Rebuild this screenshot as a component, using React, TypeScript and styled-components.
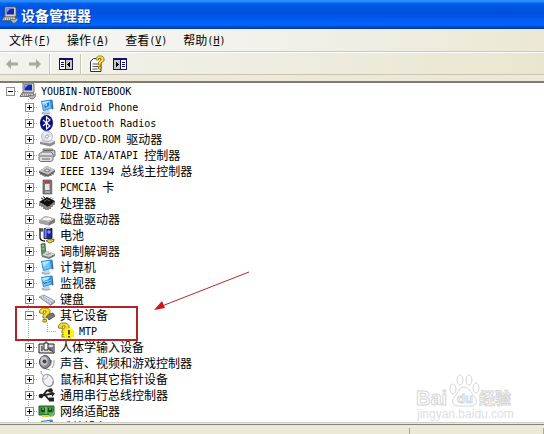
import React from "react";
import styled, { createGlobalStyle, css } from "styled-components";

const GlobalStyle = createGlobalStyle`
  html, body, #root { height: 100%; margin: 0; }
  *, *::before, *::after { box-sizing: border-box; }
  body { overflow: hidden; background: #ece9d8; }
  button { font: inherit; color: inherit; border: 0; padding: 0; background: none; }
`;

const Window = styled.main`
  display: flex;
  flex-direction: column;
  height: 100vh;
  overflow: hidden;
  color: #000;
  font: 12px/16px "Noto Sans CJK SC", sans-serif;
`;

const TitleBar = styled.header`
  display: flex;
  flex: none;
  align-items: center;
  gap: 3px;
  height: 29px;
  padding: 0 2px;
  background: linear-gradient(#2f8fff 0, #2487fb 2px, #0563ec 3px, #0054e3 7px, #0050e0 14px, #005cf5 20px, #0066ff 25px, #0048c8 27px, #003a9c 29px);
`;

const Title = styled.h1`
  margin: 0;
  color: #fff;
  font-size: 14px;
  line-height: 20px;
  font-weight: 700;
  text-shadow: 1px 1px 0 #0b3a99;
`;

const MenuBar = styled.nav`
  display: flex;
  flex: none;
  gap: 16px;
  height: 23px;
  padding: 3px 9px;
  background: linear-gradient(90deg, #f6f6f6, #f2f1ea 50%, #ece8d5);
  border-bottom: 1px solid #cbc8b4;
`;

const MenuButton = styled.button`
  display: flex;
  white-space: nowrap;
`;

const Mono = styled.span`
  padding-top: 1px;
  font-family: "DejaVu Sans Mono", monospace;
  font-size: 10px;
  white-space: pre;
`;

const ToolBar = styled.div`
  display: flex;
  flex: none;
  align-items: center;
  height: 23px;
  background: linear-gradient(90deg, #f3f3ee, #efede2 45%, #e9e6cf);
  border-top: 1px solid #fff;
  border-bottom: 1px solid #c9c5b2;
`;

const ToolButton = styled.button`
  display: flex;
  justify-content: center;
  width: 23px;
`;

const Separator = styled.span`
  width: 2px;
  height: 20px;
  margin: 0 3px;
  border-left: 1px solid #c9c6b6;
  border-right: 1px solid #fff;
`;

const Icon = styled.svg`
  display: block;
  flex: none;
  width: 16px;
  height: 16px;
  overflow: visible;
`;

const TreePane = styled.section`
  position: relative;
  flex: 1;
  min-height: 0;
  margin-top: 6px;
  overflow: hidden;
  background: #fff;
  border-top: 2px solid #7d7c72;
  border-bottom: 1px solid #d0cec4;
`;

const TreeList = styled.ul`
  margin: 0;
  padding: 0;
  list-style: none;
`;

const TreeItem = styled.li<{ $marked?: boolean }>`
  ${(p) =>
    p.$marked &&
    css`
      position: relative;
      &::after {
        content: "";
        position: absolute;
        top: -1px;
        bottom: -2px;
        left: 15px;
        width: 123px;
        border: 2px solid #b32428;
      }
    `}
`;

const Row = styled.div`
  display: flex;
  align-items: center;
  height: 16px;
`;

const Gutter = styled.span<{ $down?: "full" | "half"; $across?: boolean }>`
  display: flex;
  flex: none;
  align-items: center;
  justify-content: center;
  width: 19px;
  height: 16px;
  background-repeat: no-repeat;
  background-image:
    ${(p) => (p.$down ? "repeating-linear-gradient(#aaa 0 1px, transparent 1px 2px)" : "none")},
    ${(p) => (p.$across ? "repeating-linear-gradient(90deg, #aaa 0 1px, transparent 1px 2px)" : "none")};
  background-size: 1px ${(p) => (p.$down === "half" ? "8px" : "16px")}, 10px 1px;
  background-position: 9px 0, 9px 8px;
`;

const Expander = styled.button`
  display: block;
  width: 10px;
  height: 10px;
  background: #fff;
  svg { display: block; }
`;

const Entry = styled.span`
  display: flex;
  align-items: center;
  gap: 5px;
  padding-left: 1px;
  white-space: nowrap;
`;

const Label = styled.span`
  display: flex;
  align-items: flex-start;
  height: 16px;
`;

const Arrow = styled.svg`
  position: absolute;
  top: 185px;
  left: 150px;
`;

const Watermark = styled.div`
  position: absolute;
  right: 26px;
  bottom: 0;
  width: 104px;
  svg { display: block; }
`;

const StatusBar = styled.footer`
  display: grid;
  flex: none;
  grid-template-columns: 1fr 134px;
  height: 10px;
  margin-top: 1px;
  background: #ece9d8;
  border-top: 1px solid #858478;
`;

const StatusCell = styled.span`
  margin-top: 3px;
  border-right: 1px solid #aca899;
`;

type IconName =
  | "pc" | "phone" | "bluetooth" | "disc" | "ide" | "firewire" | "pcmcia" | "chip" | "disk" | "battery"
  | "modem" | "computer" | "monitor" | "keyboard" | "question" | "warning" | "hid" | "sound" | "mouse" | "usb" | "network";

const blueScreen = (
  <>
    <ellipse cx="7" cy="14" rx="4.5" ry="1.7" fill="#a9b4c2" />
    <path d="M6 10h4l1 4H5z" fill="#c9d3dd" />
    <path d="M2 2l10-1.500 1 9-9 2.500z" fill="#2588d8" />
    <path d="M3 3l8-1.200.8 7.200-7 2z" fill="#6fc4f6" />
    <path d="M3 3l8-1.200-6 6z" fill="#b7e6ff" />
    <path d="M12 .5l1.500.5 1 9-1.500.5z" fill="#346a9c" />
  </>
);

const questionMark = (
  <>
    <path d="M2.500 6V3.500L5.500 1h5L13 3.500V6l-3.500 3v2H6V8l3-2.500V4H6.500v2.500z" fill="#f8df22" stroke="#8c7510" strokeWidth=".9" />
    <path d="M6 12.500h3.500V15H6z" fill="#f8df22" stroke="#8c7510" strokeWidth=".9" />
  </>
);

const drive = (
  <>
    <path d="M0 9l6-4 10 2.500v4L10 14.500 0 12z" fill="#777" />
    <path d="M0 9l6-4 10 2.500-6 3.700z" fill="#d2d2d2" />
    <path d="M0 9l10 2.200v3.300L0 12z" fill="#a2a2a2" />
  </>
);

const art: Record<IconName, React.ReactNode> = {
  pc: (
    <>
      <path d="M3 0h10l1 1v8l-1 1H3z" fill="#d7d4c8" stroke="#555" strokeWidth=".8" />
      <path d="M4.500 1.500h7.500v6H4.500z" fill="#1428b0" />
      <path d="M5 2h3L5 5z" fill="#87a8ff" />
      <path d="M2 10h11l1.500 3.500H0z" fill="#d7d4c8" stroke="#555" strokeWidth=".8" />
      <path d="M2 12h10" stroke="#555" strokeDasharray="1 1" />
      <path d="M8 12.500h5l2.500-2v3L13 16h-2z" fill="#b5b5b5" stroke="#555" strokeWidth=".6" />
    </>
  ),
  phone: (
    <>
      {blueScreen}
      <path d="M5 6l5-3v4L6 9z" fill="#2c7cc8" />
      <path d="M6 6l2-1v2z" fill="#fff" />
    </>
  ),
  monitor: (
    <>
      {blueScreen}
      <path d="M4 7l3-2 1 1 3-3v4L5 9z" fill="#2670b8" />
      <path d="M5 7.500L7 6l1 1 3-2" fill="none" stroke="#b7f0ae" />
    </>
  ),
  computer: blueScreen,
  bluetooth: (
    <>
      <ellipse cx="7.500" cy="8" rx="6.500" ry="8" fill="#0b1280" />
      <path d="M4 5l7 6-3.500 3V2L11 5l-7 6" fill="none" stroke="#fff" strokeWidth="1.100" />
    </>
  ),
  disc: (
    <>
      <path d="M1 11l4-3 11 2v3l-5 2.500L1 13z" fill="#8c8c8c" />
      <path d="M1 11l4-3 11 2-5 2.500z" fill="#dedede" />
      <ellipse cx="8" cy="5.500" rx="5.500" ry="5.300" fill="#dce2ed" stroke="#a4a9b7" strokeWidth=".8" />
      <path d="M8 5.500L4 2l3-1.500zM8 5.500l5 1-2 3z" fill="#f7fbff" />
      <circle cx="8" cy="5.500" r="1.500" fill="#fff" stroke="#888" strokeWidth=".7" />
    </>
  ),
  ide: (
    <>
      <path d="M4 2h9l3 2v5l-2 1H4z" fill="#c8c8c8" stroke="#555" strokeWidth=".8" />
      <path d="M0 7l3-2h9l2 2v6l-2 1.500H1.500L0 13z" fill="#ddd" stroke="#555" strokeWidth=".8" />
      <path d="M1 9h12M5 3.500h9" stroke="#666" />
      <path d="M3 12h8" stroke="#8c8c8c" strokeWidth="1.500" />
    </>
  ),
  firewire: (
    <>
      <path d="M0 8l8-5 8 4v2l-7 5-9-4z" fill="#666" />
      <path d="M0 8l8-5 8 4-7 4.500z" fill="#c9c9c9" />
      <path d="M4 8l4-2.500 4 2-3.500 2z" fill="#777" />
      <path d="M6 7.500l2-1 2 1-1.500 1z" fill="#eee" />
      <path d="M2 10v2M4 11v2M6 12v2M12 12v1M14 10v2" stroke="#444" />
    </>
  ),
  pcmcia: (
    <>
      <path d="M4 1h8l.8 1v13H4z" fill="#77777f" stroke="#555" strokeWidth=".7" />
      <path d="M5 2h6.500v2H5z" fill="#b9433b" />
      <path d="M6 5h4.500v6H6z" fill="#e5e5e5" />
      <path d="M6 13h5" stroke="#ddd" />
    </>
  ),
  chip: (
    <>
      <path d="M0 7l8-5 8 4-7 6z" fill="#111" />
      <path d="M1 8v3M3 9v3M5 10v4M7 11v4M9 12v3M11 10v4M13 8v4M15 6v4" stroke="#111" />
      <path d="M5 6.500l3-2 3 1.500" fill="none" stroke="#777" strokeWidth=".8" />
      <path d="M2 3l2 1M4 1.500L6 3M12 2.500l-1 1M14 3.500l-1 1" stroke="#111" />
    </>
  ),
  disk: (
    <>
      {drive}
      <ellipse cx="8" cy="8" rx="5" ry="2" fill="#f4f4f4" stroke="#888" strokeWidth=".6" />
      <path d="M12 12.500l2-1" stroke="#6a9b47" />
    </>
  ),
  battery: (
    <>
      <path d="M1 1v9q0 4 5 4" fill="none" stroke="#111" strokeWidth="1.300" />
      <path d="M3 1v4M1 3h3" stroke="#222" />
      <path d="M5 1.500h8v10H5z" fill="#1a22a8" stroke="#111" strokeWidth=".8" />
      <path d="M5.500 2h2v9h-2z" fill="#7782ec" />
      <path d="M7 0h4v1.500H7zM8 5h4M10 3v4" fill="#ccc" stroke="#c6d2ff" strokeWidth=".8" />
      <path d="M7 14l3-2 2 1 3-1v2l-4 2z" fill="#f3d731" stroke="#333" strokeWidth=".7" />
    </>
  ),
  modem: (
    <>
      <path d="M2 1l4-.5L7 12l-4 1z" fill="#62915d" stroke="#444" strokeWidth=".7" />
      <path d="M3 3l2-.3M3.300 6l2-.3" stroke="#b9e2b2" />
      <path d="M3 12l5-4 8 3v2l-6 3-7-2z" fill="#777" />
      <path d="M3 12l5-4 8 3-6 3z" fill="#d6d6d6" />
      <path d="M7 11l3 1M9 10l3 1" stroke="#777" strokeWidth=".7" />
    </>
  ),
  keyboard: (
    <>
      <path d="M0 6l5-2 11 6-5 4z" fill="#d8dbe8" stroke="#777" strokeWidth=".7" />
      <path d="M2 6.500l9 6M4 5.500l9 6" stroke="#6f7891" strokeDasharray="1 1" />
      <path d="M11 14l5-4v1.500l-5 3.500z" fill="#777" />
    </>
  ),
  question: (
    <>
      <path d="M7 8l7-2 2 3-6 4z" fill="#777" stroke="#333" strokeWidth=".7" />
      <g transform="translate(-2)">{questionMark}</g>
    </>
  ),
  warning: (
    <>
      <g transform="translate(-2 -1)">{questionMark}</g>
      <circle cx="11" cy="10.500" r="5.500" fill="#fff11a" />
      <path d="M11 7v4.500M11 13v1.500" stroke="#111" strokeWidth="1.500" />
    </>
  ),
  hid: (
    <>
      <path d="M0 5h15v9H0z" fill="#ddd" stroke="#222" />
      <path d="M2 7h2v5H2zM10 8h4v4h-4z" fill="#777" />
      <path d="M5 4v7h4V4z" fill="#fff" stroke="#222" />
      <path d="M7 4V0M9 9l5 4" stroke="#333" />
    </>
  ),
  sound: (
    <>
      <ellipse cx="6" cy="7" rx="5.500" ry="6.500" fill="#8b8b8e" stroke="#4d4d50" />
      <ellipse cx="5" cy="6" rx="3.500" ry="4.500" fill="#c9c9ce" />
      <circle cx="5.500" cy="6.500" r="2" fill="#444" />
      <path d="M11 11q2-3 1.500-6M13 13q3-4 2-8M7 14l4 1" fill="none" stroke="#8d94ad" />
    </>
  ),
  mouse: (
    <>
      <path d="M5 5Q1 3 2 0" fill="none" stroke="#999" />
      <ellipse cx="9" cy="9.500" rx="5" ry="6.500" transform="rotate(-30 9 9.500)" fill="#f2f2f5" stroke="#9a9aa5" />
      <path d="M4 8q4 1 5-4" fill="none" stroke="#b3b3bb" />
      <path d="M9 15.500q5 0 5-5" fill="none" stroke="#85858f" />
    </>
  ),
  usb: (
    <>
      <path d="M0 9l14-2.500M4 8l4-4.500h3M6 8l4 4.500h3" fill="none" stroke="#222" strokeWidth="1.800" />
      <circle cx="2" cy="9" r="2.300" fill="#222" />
      <circle cx="11.500" cy="3.500" r="2.300" fill="#222" />
      <path d="M12 4l4 2.500-3 3.500zM10 10.500h5v4h-5z" fill="#222" />
    </>
  ),
  network: (
    <>
      <path d="M0 3h15v9H0z" fill="#3c943b" stroke="#256326" />
      <path d="M2 5h4v4H2zM9 5h4v4H9z" fill="#174d1a" />
      <path d="M3 6h2M10 6h2M7 4v7" stroke="#ace79a" />
      <path d="M3 12v2h7v-2" fill="#e0c744" />
      <path d="M10 10l5-1v4l-4 1z" fill="#69b85d" />
    </>
  ),
};

const Glyph = ({ name }: { name: IconName }) => (
  <Icon viewBox="0 0 16 16" aria-hidden="true">{art[name]}</Icon>
);

/* Latin runs use the half-width face, everything else the full-width one. */
const Text = ({ children }: { children: string }) => (
  <Label>
    {(children.match(/[ -~]+|[^ -~]+/g) ?? []).map((run, i) =>
      /^[ -~]/.test(run) ? <Mono key={i}>{run}</Mono> : <span key={i}>{run}</span>
    )}
  </Label>
);

const Toggle = ({ open, label }: { open?: boolean; label: string }) => (
  <Expander aria-label={label} aria-expanded={!!open}>
    <svg width="10" height="10" viewBox="0 0 10 10" shapeRendering="crispEdges">
      <path d="M1.500 1.500h8v8h-8z" fill="#fff" stroke="#8e8e8e" />
      <path d={open ? "M3 5.500h5" : "M3 5.500h5M5.500 3v5"} stroke="#000" />
    </svg>
  </Expander>
);

type Device = { icon: IconName; label: string; child?: Device };

const devices: Device[] = [
  { icon: "phone", label: "Android Phone" },
  { icon: "bluetooth", label: "Bluetooth Radios" },
  { icon: "disc", label: "DVD/CD-ROM 驱动器" },
  { icon: "ide", label: "IDE ATA/ATAPI 控制器" },
  { icon: "firewire", label: "IEEE 1394 总线主控制器" },
  { icon: "pcmcia", label: "PCMCIA 卡" },
  { icon: "chip", label: "处理器" },
  { icon: "disk", label: "磁盘驱动器" },
  { icon: "battery", label: "电池" },
  { icon: "modem", label: "调制解调器" },
  { icon: "computer", label: "计算机" },
  { icon: "monitor", label: "监视器" },
  { icon: "keyboard", label: "键盘" },
  { icon: "question", label: "其它设备", child: { icon: "warning", label: "MTP" } },
  { icon: "hid", label: "人体学输入设备" },
  { icon: "sound", label: "声音、视频和游戏控制器" },
  { icon: "mouse", label: "鼠标和其它指针设备" },
  { icon: "usb", label: "通用串行总线控制器" },
  { icon: "network", label: "网络适配器" },
  { icon: "computer", label: "系统设备" },
];

const menus = [["文件", "F"], ["操作", "A"], ["查看", "V"], ["帮助", "H"]];

const DeviceNode = ({ icon, label, child }: Device) => (
  <TreeItem $marked={!!child}>
    <Row>
      <Gutter />
      <Gutter $down="full" $across><Toggle open={!!child} label={label} /></Gutter>
      <Entry><Glyph name={icon} /><Text>{label}</Text></Entry>
    </Row>
    {child && (
      <TreeList>
        <TreeItem>
          <Row>
            <Gutter />
            <Gutter $down="full" />
            <Gutter $down="half" $across />
            <Entry><Glyph name={child.icon} /><Text>{child.label}</Text></Entry>
          </Row>
        </TreeItem>
      </TreeList>
    )}
  </TreeItem>
);

const PaneIcon = ({ flip }: { flip?: boolean }) => (
  <Icon viewBox="0 0 16 16" shapeRendering="crispEdges">
    <g transform={flip ? "matrix(-1 0 0 1 16 0)" : undefined}>
      <path d="M1.500 2.500h13v11h-13z" fill="#fff" stroke="#10106e" />
      <path d="M1 2h14v2H1zM7 3h1v10H7z" fill="#10106e" />
      <path d="M8 4h6v9H8z" fill="#c9c9c4" />
      <path d="M3 6h3M3 8h3M3 10h3" stroke="#10106e" />
      <path d="M12 5v7L9 8.500z" fill="#000" />
    </g>
  </Icon>
);

export default function App() {
  return (
    <>
      <GlobalStyle />
      <Window>
        <TitleBar>
          <Glyph name="pc" />
          <Title>设备管理器</Title>
        </TitleBar>
        <MenuBar>
          {menus.map(([name, key]) => (
            <MenuButton key={key}>
              {name}<Mono>(<u>{key}</u>)</Mono>
            </MenuButton>
          ))}
        </MenuBar>
        <ToolBar>
          <ToolButton aria-label="后退">
            <Icon viewBox="0 0 16 16"><path d="M2 8l5-5v3.500h7v3H7V13z" fill="#aaa99d" /></Icon>
          </ToolButton>
          <ToolButton aria-label="前进">
            <Icon viewBox="0 0 16 16"><path d="M14 8L9 3v3.500H2v3h7V13z" fill="#aaa99d" /></Icon>
          </ToolButton>
          <Separator />
          <ToolButton aria-label="显示控制台树"><PaneIcon /></ToolButton>
          <Separator />
          <ToolButton aria-label="属性">
            <Icon viewBox="0 0 16 16">
              <path d="M1.500 5.500l3-3H12v13H1.500z" fill="#fff" stroke="#333" />
              <path d="M3.500 8h6M3.500 10.500h6M3.500 13h5" stroke="#555" />
              <path d="M7 4V2l2.500-2H13l2 2v3l-3 2v2H9.500V6L12 4V2.500h-2.500V4z" fill="#ffe73a" stroke="#7d6711" strokeWidth=".8" />
              <path d="M9.500 10.500H12v2.500H9.500z" fill="#ffe73a" stroke="#7d6711" strokeWidth=".8" />
            </Icon>
          </ToolButton>
          <ToolButton aria-label="显示操作窗格"><PaneIcon flip /></ToolButton>
        </ToolBar>
        <TreePane>
          <TreeList>
            <TreeItem>
              <Row>
                <Gutter $across><Toggle open label="YOUBIN-NOTEBOOK" /></Gutter>
                <Entry><Glyph name="pc" /><Text>YOUBIN-NOTEBOOK</Text></Entry>
              </Row>
              <TreeList>
                {devices.map((d) => <DeviceNode key={d.label} {...d} />)}
              </TreeList>
            </TreeItem>
          </TreeList>
          <Arrow width="104" height="48" viewBox="0 0 104 48" aria-hidden="true">
            <path d="M99 4L12 38" stroke="#b5282b" strokeWidth="1" />
            <path d="M4 42l8-9 3 7z" fill="#d41418" />
          </Arrow>
          <Watermark>
            <svg width="104" height="50" viewBox="0 0 104 50" fill="#fff" stroke="#d6d6d6" strokeWidth="1" fontFamily="Liberation Sans, Noto Sans CJK SC, sans-serif" fontWeight="700">
              <text x="2" y="33" fontSize="20">Bai</text>
              <ellipse cx="39" cy="17" rx="3" ry="5" />
              <ellipse cx="46" cy="8" rx="3" ry="5" />
              <ellipse cx="55" cy="8" rx="3" ry="5" />
              <ellipse cx="62" cy="16" rx="3" ry="5" />
              <path d="M50 15c5 0 6 5 10 9s3 10-3 10H44c-6 0-7-6-3-10s4-9 9-9z" />
              <text x="43" y="31" fontSize="13">du</text>
              <text x="65" y="32" fontSize="16" fontFamily="Noto Sans CJK SC, sans-serif">经验</text>
              <text x="3" y="46" fontSize="12" fontWeight="400" fill="#dedede" stroke="none">jingyan.baidu.com</text>
            </svg>
          </Watermark>
        </TreePane>
        <StatusBar><StatusCell /><StatusCell /></StatusBar>
      </Window>
    </>
  );
}
